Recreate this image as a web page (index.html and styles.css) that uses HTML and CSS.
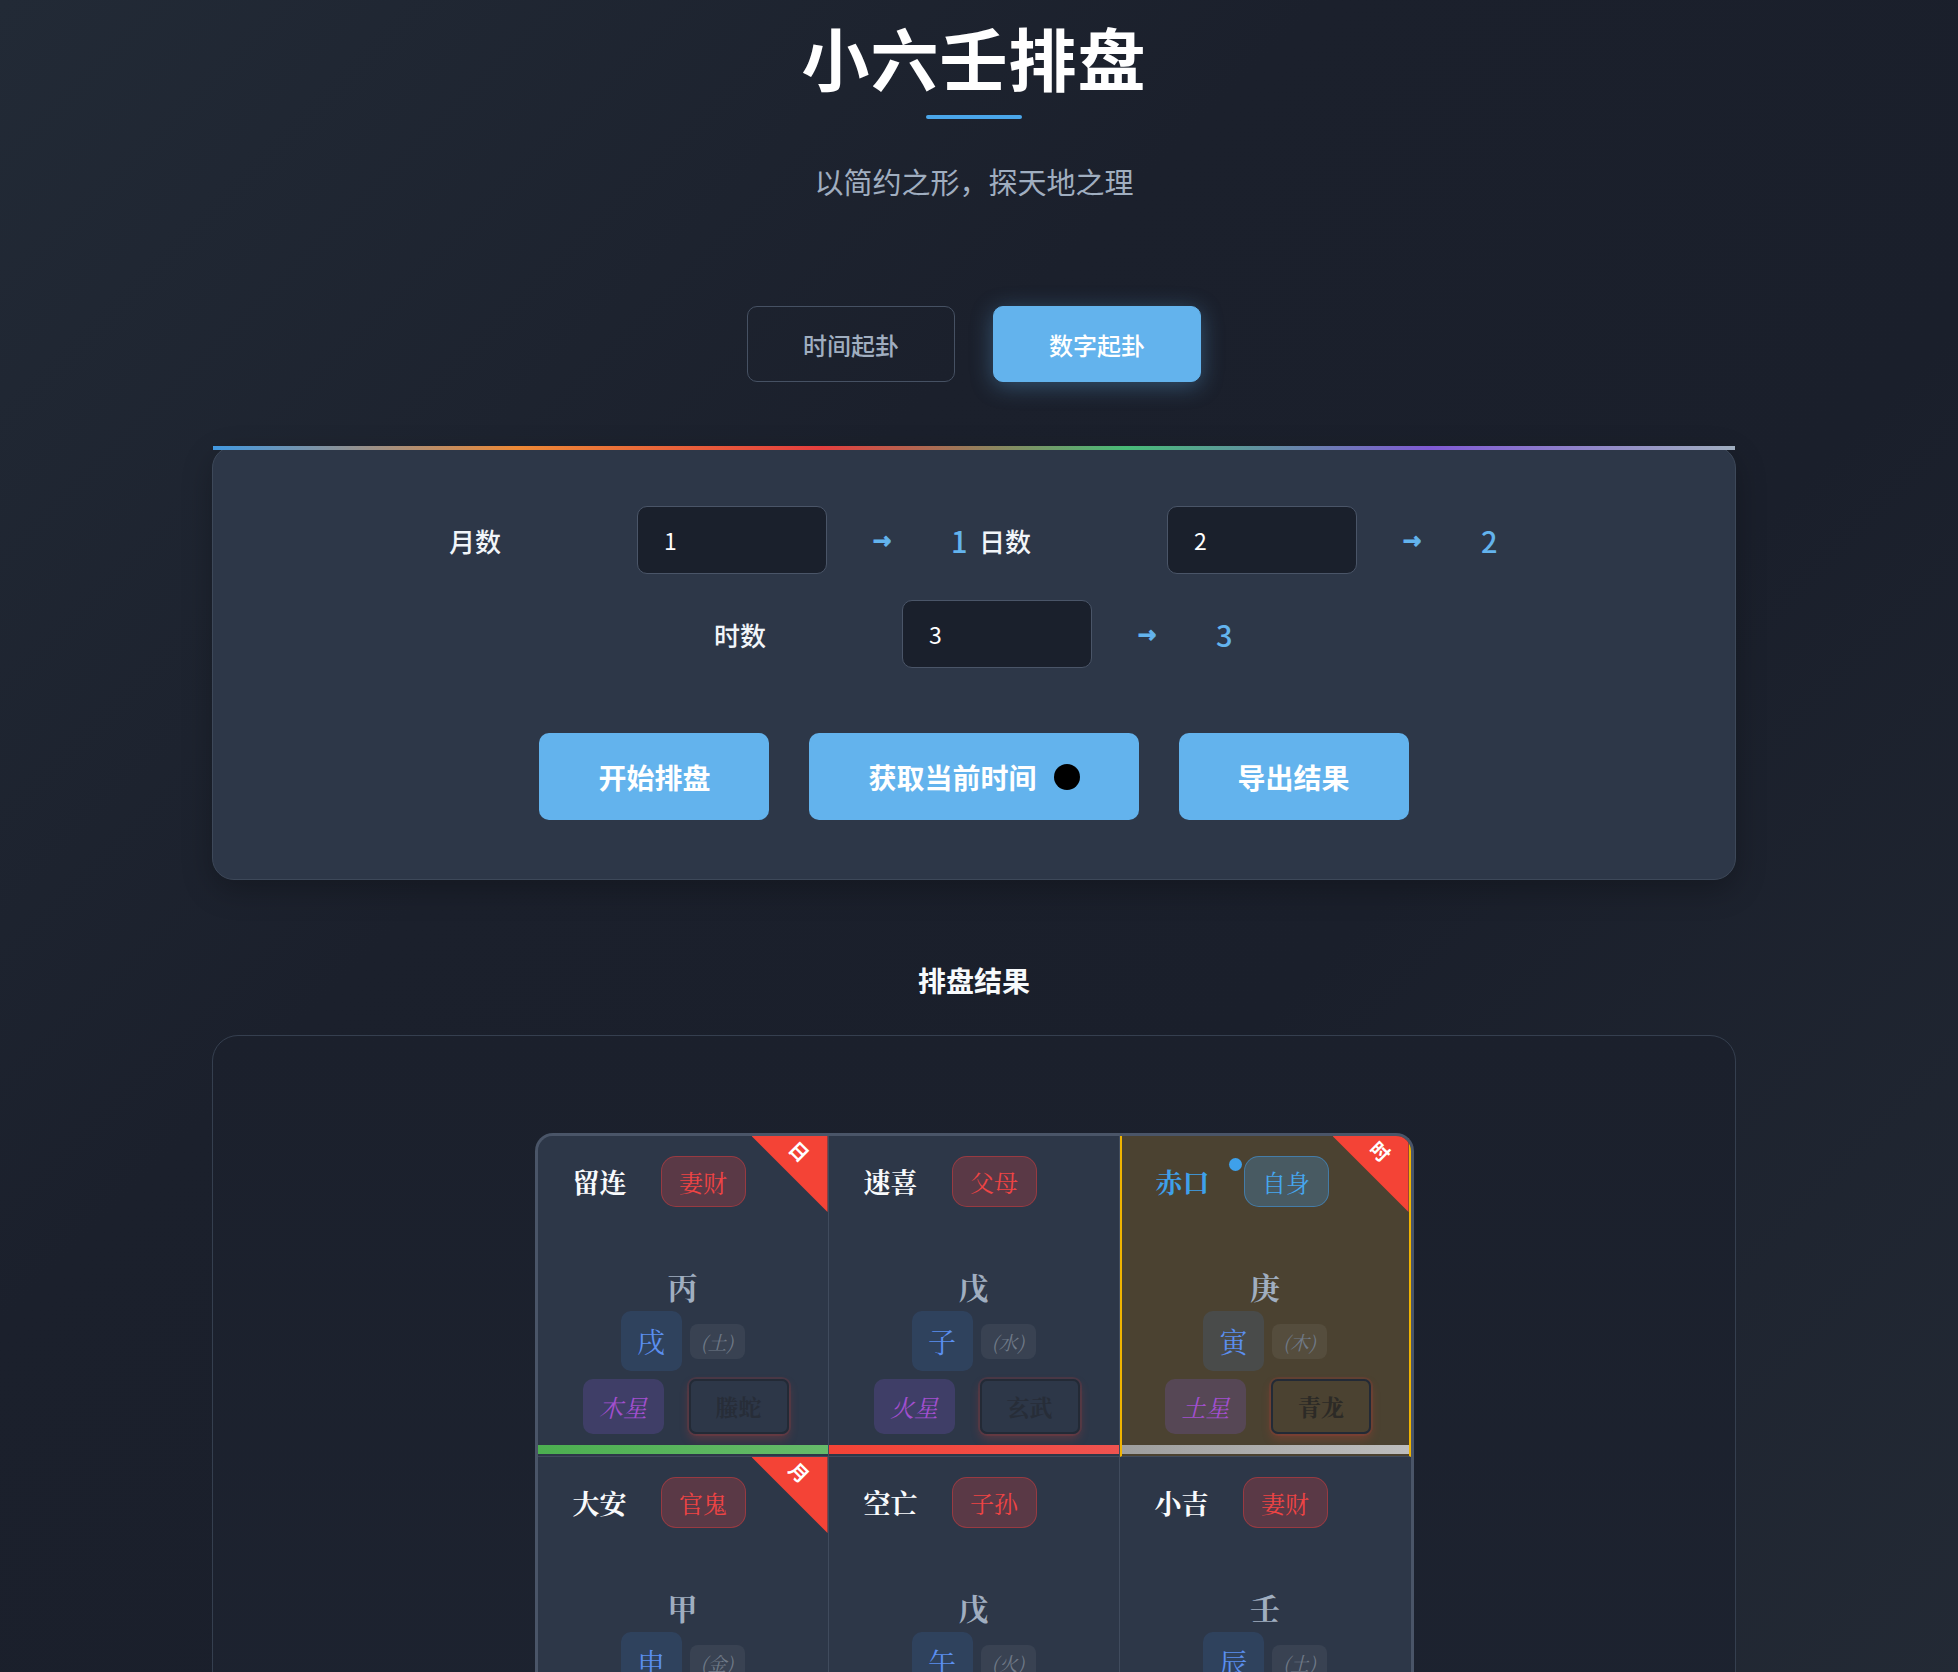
FILE: index.html
```html
<!DOCTYPE html>
<html lang="zh-CN">
<head>
<meta charset="utf-8">
<title>小六壬排盘</title>
<link rel="stylesheet" href="styles.css">
</head>
<body>
<div class="page">
  <header class="hero">
    <h1 class="hero-title">小六壬排盘</h1>
    <div class="hero-line"></div>
    <p class="hero-sub">以简约之形，探天地之理</p>
  </header>

  <nav class="modes">
    <button class="mode-btn">时间起卦</button>
    <button class="mode-btn mode-btn-active">数字起卦</button>
  </nav>

  <section class="panel">
    <div class="fields">
      <div class="field">
        <label class="field-label">月数</label>
        <input class="field-input" type="text" value="1">
        <span class="field-arrow">→</span>
        <span class="field-value">1</span>
      </div>
      <div class="field">
        <label class="field-label">日数</label>
        <input class="field-input" type="text" value="2">
        <span class="field-arrow">→</span>
        <span class="field-value">2</span>
      </div>
      <div class="field">
        <label class="field-label">时数</label>
        <input class="field-input" type="text" value="3">
        <span class="field-arrow">→</span>
        <span class="field-value">3</span>
      </div>
    </div>
    <div class="actions">
      <button class="action-btn">开始排盘</button>
      <button class="action-btn">获取当前时间<span class="dot-black"></span></button>
      <button class="action-btn">导出结果</button>
    </div>
  </section>

  <h2 class="result-title">排盘结果</h2>

  <section class="result">
    <div class="board">
      <div class="cell">
        <div class="ribbon"><span class="ribbon-text">日</span></div>
        <div class="cell-head"><span class="cell-name">留连</span><span class="tag tag-red">妻财</span></div>
        <div class="stem">丙</div>
        <div class="branch-row"><span class="branch">戌</span><span class="element">(土)</span></div>
        <div class="star-row"><span class="star">木星</span><span class="god">螣蛇</span></div>
        <div class="bar bar-green"></div>
      </div>
      <div class="cell">
        <div class="cell-head"><span class="cell-name">速喜</span><span class="tag tag-red">父母</span></div>
        <div class="stem">戊</div>
        <div class="branch-row"><span class="branch">子</span><span class="element">(水)</span></div>
        <div class="star-row"><span class="star">火星</span><span class="god">玄武</span></div>
        <div class="bar bar-red"></div>
      </div>
      <div class="cell cell-active">
        <div class="ribbon"><span class="ribbon-text">时</span></div>
        <div class="cell-head"><span class="cell-name cell-name-blue">赤口</span><span class="tag tag-blue"><span class="tag-dot"></span>自身</span></div>
        <div class="stem">庚</div>
        <div class="branch-row"><span class="branch">寅</span><span class="element">(木)</span></div>
        <div class="star-row"><span class="star">土星</span><span class="god">青龙</span></div>
        <div class="bar bar-grey"></div>
      </div>
      <div class="cell">
        <div class="ribbon"><span class="ribbon-text">月</span></div>
        <div class="cell-head"><span class="cell-name">大安</span><span class="tag tag-red">官鬼</span></div>
        <div class="stem">甲</div>
        <div class="branch-row"><span class="branch">申</span><span class="element">(金)</span></div>
        <div class="star-row"><span class="star">金星</span><span class="god">白虎</span></div>
        <div class="bar bar-grey"></div>
      </div>
      <div class="cell">
        <div class="cell-head"><span class="cell-name">空亡</span><span class="tag tag-red">子孙</span></div>
        <div class="stem">戊</div>
        <div class="branch-row"><span class="branch">午</span><span class="element">(火)</span></div>
        <div class="star-row"><span class="star">水星</span><span class="god">朱雀</span></div>
        <div class="bar bar-grey"></div>
      </div>
      <div class="cell">
        <div class="cell-head"><span class="cell-name">小吉</span><span class="tag tag-red">妻财</span></div>
        <div class="stem">壬</div>
        <div class="branch-row"><span class="branch">辰</span><span class="element">(土)</span></div>
        <div class="star-row"><span class="star">太阳</span><span class="god">勾陈</span></div>
        <div class="bar bar-grey"></div>
      </div>
    </div>
  </section>
</div>
</body>
</html>
```

FILE: styles.css
```css
* { box-sizing: border-box; }

html, body { margin: 0; padding: 0; }

body {
  min-height: 100vh;
  padding-right: 10px;
  background: linear-gradient(135deg, #222a36 0%, #1b202c 35%, #1a1f2b 60%, #242b36 100%);
  color: #e2e8f0;
  font-family: "Noto Sans CJK SC", "Noto Sans", sans-serif;
}

.page {
  max-width: 1524px;
  margin: 0 auto;
  display: flex;
  flex-direction: column;
  align-items: stretch;
}

/* ---------- header ---------- */
.hero {
  display: flex;
  flex-direction: column;
  align-items: center;
  padding-top: 16px;
}

.hero-title {
  margin: 0;
  font-size: 68px;
  line-height: 82px;
  font-weight: 700;
  color: #ffffff;
  letter-spacing: 1px;
}

.hero-line {
  width: 96px;
  height: 4px;
  margin-top: 17px;
  border-radius: 2px;
  background: #4aa6ea;
}

.hero-sub {
  margin: 42px 0 0;
  font-size: 29px;
  line-height: 40px;
  color: #a0aec0;
  font-weight: 400;
}

/* ---------- mode switch ---------- */
.modes {
  display: flex;
  justify-content: center;
  gap: 38px;
  margin-top: 105px;
}

.mode-btn {
  width: 208px;
  height: 76px;
  border-radius: 10px;
  border: 1px solid #465163;
  background: transparent;
  color: #a0aec0;
  font-family: inherit;
  font-size: 24px;
  font-weight: 500;
}

.mode-btn-active {
  background: #63b3ed;
  border-color: #63b3ed;
  color: #ffffff;
  box-shadow: 0 4px 22px rgba(99, 179, 237, 0.35);
}

/* ---------- input panel ---------- */
.panel {
  position: relative;
  margin-top: 64px;
  padding: 59px 60px 59px;
  background: #2d3748;
  border: 1px solid #3d4859;
  border-radius: 22px;
  box-shadow: 0 10px 30px rgba(0, 0, 0, 0.25);
}

.panel::before {
  content: "";
  position: absolute;
  top: -1px;
  left: 0;
  right: 0;
  height: 4px;
  background: linear-gradient(90deg, #4299e1 0%, #ed8936 20%, #e53e3e 40%, #48bb78 60%, #805ad5 80%, #a0aec0 100%);
}

.fields {
  display: flex;
  flex-wrap: wrap;
  justify-content: center;
  gap: 26px 10px;
}

.field {
  width: 520px;
  display: flex;
  align-items: center;
}

.field-label {
  width: 188px;
  flex: none;
  font-size: 26px;
  font-weight: 500;
  color: #f1f5f9;
}

.field-input {
  width: 190px;
  height: 68px;
  flex: none;
  padding: 0 26px;
  background: #1a202c;
  border: 1px solid #4a5568;
  border-radius: 10px;
  color: #ffffff;
  font-family: inherit;
  font-size: 23px;
  outline: none;
}

.field-arrow {
  margin-left: 46px;
  width: 22px;
  color: #63b3ed;
  font-family: "DejaVu Sans", sans-serif;
  font-weight: 700;
  font-size: 22px;
  -webkit-text-stroke: 1px #63b3ed;
}

.field-value {
  margin-left: 56px;
  flex: 1;
  color: #63b3ed;
  font-size: 29px;
  font-weight: 500;
}

.actions {
  display: flex;
  justify-content: center;
  gap: 40px;
  margin-top: 65px;
}

.action-btn {
  height: 87px;
  padding: 0 59px;
  display: inline-flex;
  align-items: center;
  gap: 17px;
  border: none;
  border-radius: 10px;
  background: #63b3ed;
  color: #ffffff;
  font-family: inherit;
  font-size: 28px;
  font-weight: 700;
}

.dot-black {
  width: 26px;
  height: 26px;
  border-radius: 50%;
  background: #000000;
}

/* ---------- results ---------- */
.result-title {
  margin: 80px 0 0;
  text-align: center;
  font-size: 28px;
  line-height: 40px;
  font-weight: 700;
  color: #f7fafc;
}

.result {
  margin-top: 35px;
  padding: 97px 0 60px;
  border: 1px solid #353f4f;
  border-radius: 26px;
  background: linear-gradient(180deg, #1b202c 0%, #1d2330 100%);
}

.board {
  width: 879px;
  margin: 0 auto;
  display: grid;
  grid-template-columns: repeat(3, 1fr);
  border: 3px solid #4a5568;
  border-bottom: none;
  border-radius: 18px 18px 0 0;
  overflow: hidden;
  background: #3b4556;
  font-family: "Noto Serif CJK SC", "Noto Sans CJK SC", serif;
}

.cell {
  position: relative;
  height: 321px;
  display: flex;
  flex-direction: column;
  align-items: center;
  background: #2d3748;
  border-right: 1px solid #404b5d;
  border-bottom: 1px solid #404b5d;
}

.cell:nth-child(3n) { border-right: none; }

.cell-active {
  background: #4b4231;
  border-left: 2px solid #f0b400;
  border-right: 2px solid #f0b400;
}

.cell-active:nth-child(3n) { border-right: 2px solid #f0b400; }

.cell-head {
  align-self: stretch;
  display: flex;
  align-items: center;
  gap: 34px;
  padding: 20px 0 0 35px;
}

.cell-active .cell-head { padding-left: 34px; }

.cell-name {
  font-size: 27px;
  font-weight: 700;
  color: #f8fafc;
}

.cell-name-blue { color: #3ea0ea; }

.tag {
  position: relative;
  width: 85px;
  height: 51px;
  display: flex;
  align-items: center;
  justify-content: center;
  border-radius: 15px;
  font-size: 24px;
}

.tag-red {
  background: rgba(229, 62, 62, 0.25);
  border: 1px solid rgba(229, 62, 62, 0.45);
  color: #ef4444;
}

.tag-blue {
  background: rgba(66, 153, 225, 0.28);
  border: 1px solid rgba(66, 153, 225, 0.55);
  color: #46a6f0;
}

.tag-dot {
  position: absolute;
  left: -16px;
  top: 1px;
  width: 13px;
  height: 13px;
  border-radius: 50%;
  background: #3ea0ea;
}

.stem {
  margin-top: 61px;
  font-size: 30px;
  line-height: 36px;
  font-weight: 700;
  color: #a0aec0;
}

.branch-row {
  display: flex;
  align-items: center;
  gap: 8px;
  margin-top: 7px;
}

.branch {
  width: 61px;
  height: 60px;
  display: flex;
  align-items: center;
  justify-content: center;
  border-radius: 10px;
  background: rgba(66, 133, 225, 0.14);
  color: #5b8ff0;
  font-size: 28px;
}

.element {
  width: 55px;
  height: 35px;
  display: flex;
  align-items: center;
  justify-content: center;
  border-radius: 8px;
  background: rgba(255, 255, 255, 0.06);
  color: #707a88;
  font-style: italic;
  font-size: 19px;
}

.star-row {
  display: flex;
  align-items: center;
  gap: 25px;
  margin-top: 8px;
  margin-left: 6px;
}

.star {
  width: 81px;
  height: 55px;
  display: flex;
  align-items: center;
  justify-content: center;
  border-radius: 10px;
  background: rgba(128, 90, 213, 0.22);
  color: #a24fcf;
  font-style: italic;
  font-size: 24px;
}

.god {
  width: 100px;
  height: 55px;
  display: flex;
  align-items: center;
  justify-content: center;
  border-radius: 7px;
  background: transparent;
  border: 2px solid #232a36;
  box-shadow: 0 0 0 2px rgba(200, 60, 60, 0.16), 0 5px 10px rgba(220, 60, 50, 0.26);
  color: #272d38;
  font-size: 23px;
  font-weight: 700;
}

.cell-active .god { color: #2c2a26; }

.bar {
  align-self: stretch;
  margin-top: auto;
  margin-bottom: 2px;
  height: 9px;
}

.bar-green { background: linear-gradient(90deg, #4caf50, #66bb6a); }
.bar-red { background: linear-gradient(90deg, #f44336, #ef5350); }
.bar-grey { background: linear-gradient(90deg, #9e9e9e, #bdbdbd); }

.cell:nth-child(n+4) .bar { visibility: hidden; }

.ribbon {
  position: absolute;
  top: 0;
  right: 0;
  width: 76px;
  height: 76px;
  background: #f44336;
  clip-path: polygon(0 0, 100% 0, 100% 100%);
}

.ribbon-text {
  position: absolute;
  top: 5px;
  right: 18px;
  font-family: "Noto Sans CJK SC", sans-serif;
  font-size: 19px;
  line-height: 20px;
  font-weight: 700;
  color: #ffffff;
  transform: rotate(45deg);
}
```
